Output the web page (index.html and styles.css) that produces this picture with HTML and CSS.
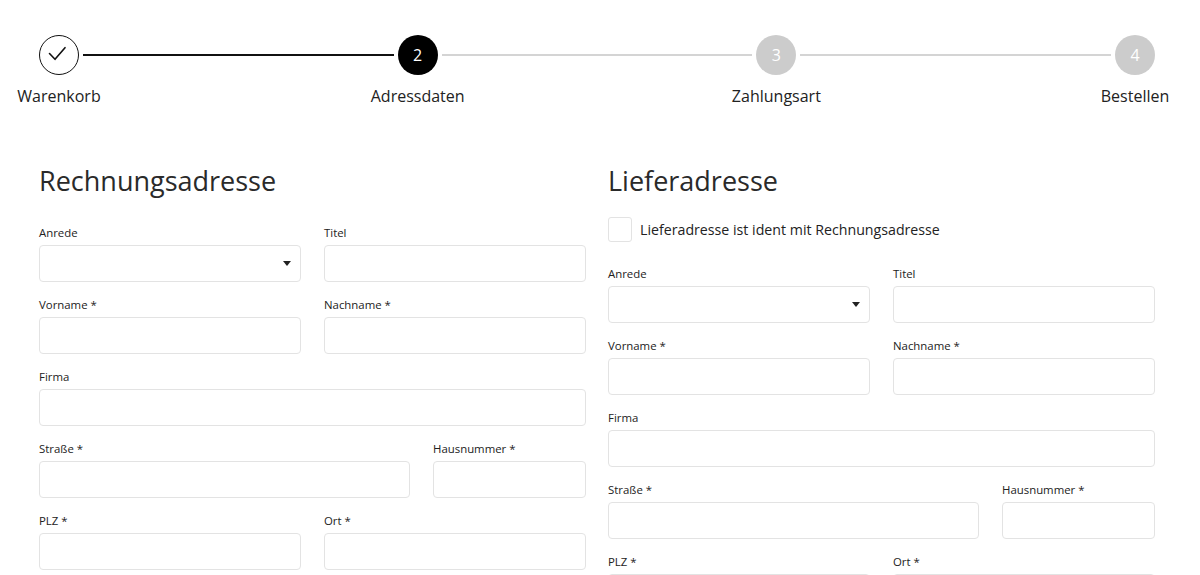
FILE: index.html
```html
<!DOCTYPE html>
<html lang="de">
<head>
  <meta charset="UTF-8">
  <title>Adressdaten</title>
  <link rel="stylesheet" href="styles.css">
</head>
<body>

  <div class="stepper">
    <div class="step done">
      <span class="circle">
        <svg width="40" height="40" viewBox="0 0 40 40"><polyline points="10.5,18.5 16,24.3 26,12.7" fill="none" stroke="#111" stroke-width="1.6" stroke-linecap="round" stroke-linejoin="round"/></svg>
      </span>
      <span class="step-label">Warenkorb</span>
    </div>
    <div class="line dark"></div>
    <div class="step active">
      <span class="circle">2</span>
      <span class="step-label">Adressdaten</span>
    </div>
    <div class="line"></div>
    <div class="step">
      <span class="circle">3</span>
      <span class="step-label">Zahlungsart</span>
    </div>
    <div class="line"></div>
    <div class="step">
      <span class="circle">4</span>
      <span class="step-label">Bestellen</span>
    </div>
  </div>

  <div class="columns">
    <div class="column">
      <h2>Rechnungsadresse</h2>

      <div class="row half">
        <div class="field">
          <label>Anrede</label>
          <div class="select"><select></select></div>
        </div>
        <div class="field">
          <label>Titel</label>
          <input type="text">
        </div>
      </div>
      <div class="row half">
        <div class="field">
          <label>Vorname *</label>
          <input type="text">
        </div>
        <div class="field">
          <label>Nachname *</label>
          <input type="text">
        </div>
      </div>
      <div class="row">
        <div class="field">
          <label>Firma</label>
          <input type="text">
        </div>
      </div>
      <div class="row street">
        <div class="field">
          <label>Straße *</label>
          <input type="text">
        </div>
        <div class="field">
          <label>Hausnummer *</label>
          <input type="text">
        </div>
      </div>
      <div class="row half">
        <div class="field">
          <label>PLZ *</label>
          <input type="text">
        </div>
        <div class="field">
          <label>Ort *</label>
          <input type="text">
        </div>
      </div>
    </div>

    <div class="column">
      <h2>Lieferadresse</h2>

      <label class="check">
        <span class="box"></span>
        Lieferadresse ist ident mit Rechnungsadresse
      </label>

      <div class="row half">
        <div class="field">
          <label>Anrede</label>
          <div class="select"><select></select></div>
        </div>
        <div class="field">
          <label>Titel</label>
          <input type="text">
        </div>
      </div>
      <div class="row half">
        <div class="field">
          <label>Vorname *</label>
          <input type="text">
        </div>
        <div class="field">
          <label>Nachname *</label>
          <input type="text">
        </div>
      </div>
      <div class="row">
        <div class="field">
          <label>Firma</label>
          <input type="text">
        </div>
      </div>
      <div class="row street">
        <div class="field">
          <label>Straße *</label>
          <input type="text">
        </div>
        <div class="field">
          <label>Hausnummer *</label>
          <input type="text">
        </div>
      </div>
      <div class="row half">
        <div class="field">
          <label>PLZ *</label>
          <input type="text">
        </div>
        <div class="field">
          <label>Ort *</label>
          <input type="text">
        </div>
      </div>
    </div>
  </div>

</body>
</html>
```

FILE: styles.css
```css
body {
  font-family: "Open Sans", Arial, sans-serif;
  color: #222;
  margin: 0;
  background: #fff;
}

/* Schritte oben */
.stepper {
  display: flex;
  align-items: flex-start;
  margin: 35px 45px 0 39px;
}
.step {
  width: 40px;
  display: flex;
  flex-direction: column;
  align-items: center;
}
.circle {
  width: 40px;
  height: 40px;
  border-radius: 50%;
  box-sizing: border-box;
  display: flex;
  align-items: center;
  justify-content: center;
  background: #ccc;
  color: #fff;
  font-size: 16px;
}
.step.done .circle {
  background: #fff;
  border: 1.5px solid #111;
}
.step.done .circle svg {
  flex: none;
}
.step.active .circle {
  background: #000;
}
.step-label {
  margin-top: 10px;
  font-size: 16px;
  line-height: 22px;
  white-space: nowrap;
}
.line {
  flex: 1;
  height: 1.5px;
  margin: 19px 4px 0;
  background: #d4d4d4;
}
.line.dark {
  background: #111;
}

/* Formulare */
.columns {
  display: grid;
  grid-template-columns: 1fr 1fr;
  gap: 22px;
  margin: 55px 45px 0 39px;
}
h2 {
  font-size: 27px;
  font-weight: 400;
  line-height: 38px;
  color: #2a2a2a;
  margin: 0 0 24px;
}
.row {
  display: grid;
  grid-template-columns: 1fr;
  gap: 23px;
  margin-bottom: 14px;
}
.row.half {
  grid-template-columns: 1fr 1fr;
}
.row.street {
  grid-template-columns: 371px 1fr;
}
.field label {
  display: block;
  font-size: 11.4px;
  line-height: 18px;
  margin-bottom: 3px;
  color: #222;
}
input, select {
  display: block;
  width: 100%;
  height: 37px;
  box-sizing: border-box;
  border: 1px solid #e3e3e3;
  border-radius: 4px;
  background: #fff;
  font-family: inherit;
  font-size: 14px;
  padding: 0 10px;
  margin: 0;
  appearance: none;
  -webkit-appearance: none;
}
.select {
  position: relative;
}
.select::after {
  content: "";
  position: absolute;
  right: 10px;
  top: 16px;
  border-left: 4.5px solid transparent;
  border-right: 4.5px solid transparent;
  border-top: 5px solid #222;
}

.check {
  display: flex;
  align-items: center;
  gap: 8px;
  margin: -7px 0 23px;
  font-size: 14.2px;
  line-height: 25px;
  color: #222;
}
.box {
  width: 24px;
  height: 25px;
  box-sizing: border-box;
  border: 1px solid #e3e3e3;
  border-radius: 3px;
}
```
